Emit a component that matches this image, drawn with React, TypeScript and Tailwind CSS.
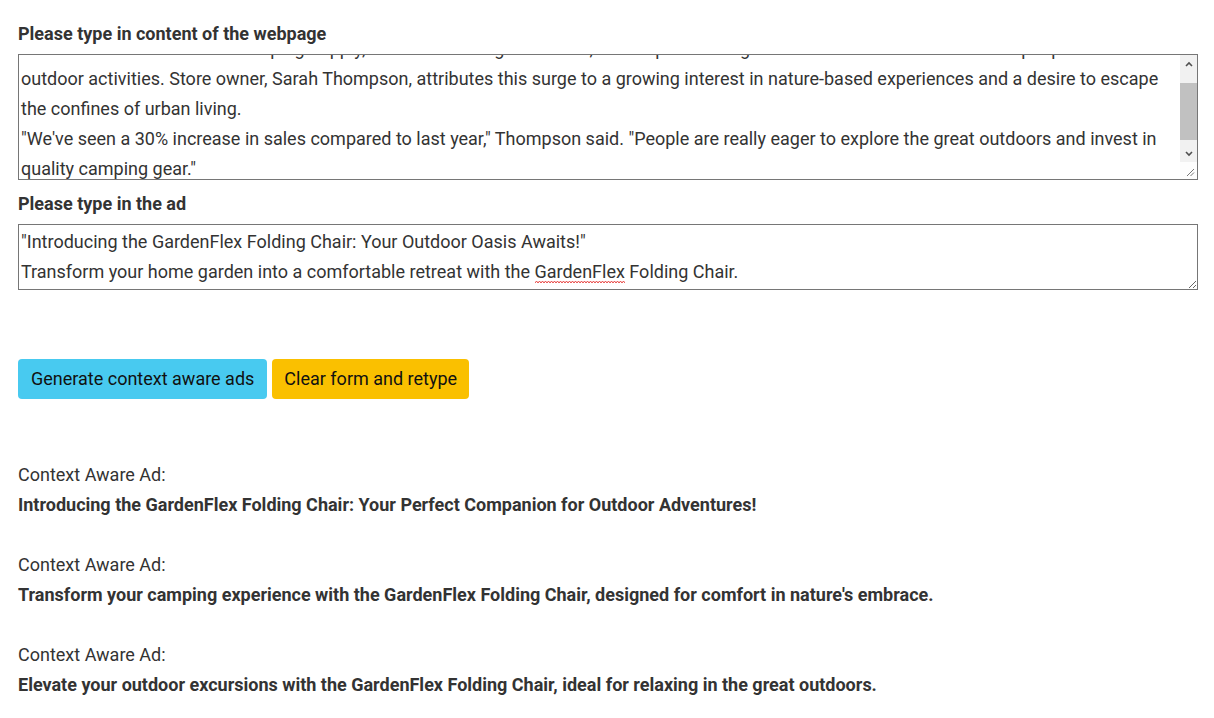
import React, { useEffect, useRef } from "react";

const article = [
  "Local Outdoor Store Reports Record Sales as Camping Season Kicks Off",
  "The owners of Wilderness Camping Supply, a local outdoor goods store, have reported a significant increase in sales as more people turn to",
  "outdoor activities. Store owner, Sarah Thompson, attributes this surge to a growing interest in nature-based experiences and a desire to escape",
  "the confines of urban living.",
  "\"We've seen a 30% increase in sales compared to last year,\" Thompson said. \"People are really eager to explore the great outdoors and invest in",
  "quality camping gear.\"",
  "",
].join("\n");

const ad = [
  "\"Introducing the GardenFlex Folding Chair: Your Outdoor Oasis Awaits!\"",
  "Transform your home garden into a comfortable retreat with the GardenFlex Folding Chair.",
].join("\n");

const results = [
  "Introducing the GardenFlex Folding Chair: Your Perfect Companion for Outdoor Adventures!",
  "Transform your camping experience with the GardenFlex Folding Chair, designed for comfort in nature's embrace.",
  "Elevate your outdoor excursions with the GardenFlex Folding Chair, ideal for relaxing in the great outdoors.",
];

// classic scrollbar look, drawn over the textarea's right edge
function FakeScrollbar() {
  return (
    <div className="absolute right-[1px] top-[1px] bottom-[1px] w-[17px] flex flex-col pointer-events-none">
      <div className="bg-[#f1f1f1] flex flex-col flex-1">
        <div className="h-[17px] flex items-center justify-center">
          <svg width="8" height="6" viewBox="0 0 8 6">
            <path d="M1 5 L4 2 L7 5" fill="none" stroke="#505050" strokeWidth="1.6" />
          </svg>
        </div>
        <div className="flex-1 flex flex-col pt-[11px] pb-[4px]">
          <div className="h-[57px] bg-[#c1c1c1]" />
        </div>
        <div className="h-[17px] flex items-center justify-center">
          <svg width="8" height="6" viewBox="0 0 8 6">
            <path d="M1 1 L4 4 L7 1" fill="none" stroke="#505050" strokeWidth="1.6" />
          </svg>
        </div>
      </div>
      <div className="h-[17px] bg-[#fdfdfd] flex items-end justify-end p-[2px]">
        <svg width="9" height="9" viewBox="0 0 9 9">
          <path d="M1 8 L8 1 M4.5 8 L8 4.5" stroke="#777" strokeWidth="1" />
        </svg>
      </div>
    </div>
  );
}

export default function App() {
  const pageRef = useRef<HTMLTextAreaElement>(null);

  useEffect(() => {
    // the reference shows the article scrolled a little
    if (pageRef.current) pageRef.current.scrollTop = 53;
  }, []);

  return (
    <div className="bg-white min-h-screen pl-[18px] pr-[16px] pt-[19px] text-[#333] font-['Roboto',sans-serif] text-[18px] leading-[30px]">
      <label className="block font-bold mb-[5px]">Please type in content of the webpage</label>
      <div className="relative">
        <textarea
          ref={pageRef}
          defaultValue={article}
          className="block w-full h-[126px] border border-[#767676] pl-[2px] pr-[19px] py-[2px] text-[18px] leading-[30px] text-[#333] outline-none [scrollbar-width:none]"
        />
        <FakeScrollbar />
      </div>
      <label className="block font-bold mt-[9px] mb-[5px]">Please type in the ad</label>
      <div className="relative">
        <textarea
          defaultValue={ad}
          className="block w-full h-[66px] border border-[#767676] px-[2px] py-[2px] text-[18px] leading-[30px] text-[#333] outline-none"
        />
        {/* spell-check squiggle under "GardenFlex" */}
        <svg className="absolute left-[517px] top-[56px] pointer-events-none" width="90" height="4" viewBox="0 0 90 4">
          <path
            d="M0 3 L1.5 1 L3 3 L4.5 1 L6 3 L7.5 1 L9 3 L10.5 1 L12 3 L13.5 1 L15 3 L16.5 1 L18 3 L19.5 1 L21 3 L22.5 1 L24 3 L25.5 1 L27 3 L28.5 1 L30 3 L31.5 1 L33 3 L34.5 1 L36 3 L37.5 1 L39 3 L40.5 1 L42 3 L43.5 1 L45 3 L46.5 1 L48 3 L49.5 1 L51 3 L52.5 1 L54 3 L55.5 1 L57 3 L58.5 1 L60 3 L61.5 1 L63 3 L64.5 1 L66 3 L67.5 1 L69 3 L70.5 1 L72 3 L73.5 1 L75 3 L76.5 1 L78 3 L79.5 1 L81 3 L82.5 1 L84 3 L85.5 1 L87 3 L88.5 1 L90 3"
            fill="none"
            stroke="#e53935"
            strokeWidth="0.9"
          />
        </svg>
      </div>

      <div className="mt-[69px] flex gap-[5px]">
        <button className="h-[40px] px-[13px] rounded-[4px] bg-[#48caf0] text-[#111] text-[18px]">
          Generate context aware ads
        </button>
        <button className="h-[40px] px-[12px] rounded-[4px] bg-[#fac000] text-[#111] text-[18px]">
          Clear form and retype
        </button>
      </div>

      <div className="mt-[61px]">
        {results.map((r, i) => (
          <div key={i} className="mb-[30px]">
            <div>Context Aware Ad:</div>
            <div className="font-bold">{r}</div>
          </div>
        ))}
      </div>
    </div>
  );
}
